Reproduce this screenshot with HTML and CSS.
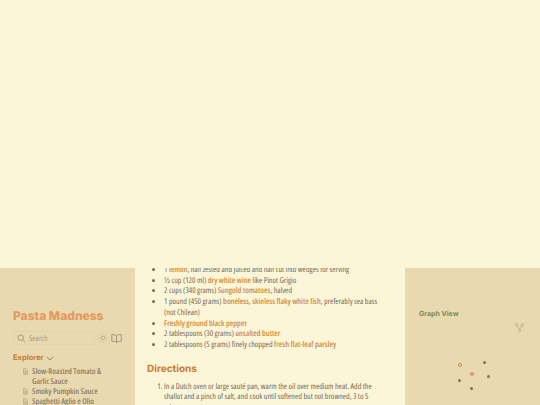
FILE: index.html
```html
<!DOCTYPE html>
<html lang="en">

<head>
    <meta charset="UTF-8">
    <meta name="viewport" content="width=device-width, initial-scale=1.0">
    <title>Pasta Madness</title>
    <link rel="stylesheet" href="styles.css">
</head>

<body>
    <div class="page">
        <!-- Left sidebar -->
        <aside class="left">
            <h1 class="site-title">Pasta Madness</h1>
            <div class="tools">
                <div class="search">
                    <svg class="search-icon" viewBox="0 0 12 12"><circle cx="5" cy="5" r="3.6"/><path d="M7.7 7.7 11 11"/></svg>
                    <span>Search</span>
                </div>
                <svg class="tool-icon" viewBox="0 0 12 12"><circle cx="6" cy="6" r="2.2"/><path d="M6 .6v1.2M6 10.2v1.2M.6 6h1.2M10.2 6h1.2M2.2 2.2l.8.8M9 9l.8.8M2.2 9.8 3 9M9 3l.8-.8"/></svg>
                <svg class="tool-icon book" viewBox="0 0 14 12"><path d="M7 2.4C6 1.4 4 1 1 1v8.6c3 0 5 .4 6 1.4 1-1 3-1.400 6-1.400V1c-3 0-5 .4-6 1.400ZM7 2.400V11"/></svg>
            </div>
            <div class="explorer">
                Explorer
                <svg class="chevron" viewBox="0 0 10 6"><path d="M1 1l4 4 4-4"/></svg>
            </div>
            <ul class="files">
                <li><svg class="file-icon" viewBox="0 0 8 10"><path d="M1 .6h4l2 2v6.800H1ZM2.500 4.500h3M2.500 6h3M2.500 7.500h3"/></svg><span>Slow-Roasted Tomato &amp; Garlic Sauce</span></li>
                <li><svg class="file-icon" viewBox="0 0 8 10"><path d="M1 .6h4l2 2v6.800H1ZM2.500 4.500h3M2.500 6h3M2.500 7.500h3"/></svg><span>Smoky Pumpkin Sauce</span></li>
                <li><svg class="file-icon" viewBox="0 0 8 10"><path d="M1 .6h4l2 2v6.800H1ZM2.500 4.500h3M2.500 6h3M2.500 7.500h3"/></svg><span>Spaghetti Aglio e Olio</span></li>
            </ul>
        </aside>

        <!-- Recipe -->
        <main class="center">
            <ul class="ingredients">
                <li>1 <b>lemon</b>, half zested and juiced and half cut into wedges for serving</li>
                <li>½ cup (120 ml) <b>dry white wine</b> like Pinot Grigio</li>
                <li>2 cups (340 grams) <b>Sungold tomatoes</b>, halved</li>
                <li>1 pound (450 grams) <b>boneless, skinless flaky white fish</b>, preferably sea bass (not Chilean)</li>
                <li><b>Freshly ground black pepper</b></li>
                <li>2 tablespoons (30 grams) <b>unsalted butter</b></li>
                <li>2 tablespoons (5 grams) finely chopped <b>fresh flat-leaf parsley</b></li>
            </ul>
            <h2 class="section">Directions</h2>
            <ol class="steps">
                <li>In a Dutch oven or large sauté pan, warm the oil over medium heat. Add the shallot and a pinch of salt, and cook until softened but not browned, 3 to 5 minutes.</li>
            </ol>
        </main>

        <!-- Right sidebar -->
        <aside class="right">
            <h3 class="graph-title">Graph View</h3>
            <div class="graph">
                <svg class="graph-icon" viewBox="0 0 10 10"><circle cx="2" cy="2" r="1.400"/><circle cx="8" cy="2" r="1.400"/><circle cx="5" cy="8" r="1.400"/><path d="M2 3.400C2 5.500 5 5 5 6.600M8 3.400C8 5.500 5 5 5 6.600"/></svg>
                <span class="node visited"></span>
                <span class="node current"></span>
                <span class="node n1"></span>
                <span class="node n2"></span>
                <span class="node n3"></span>
                <span class="node n4"></span>
            </div>
        </aside>
    </div>
</body>

</html>
```

FILE: styles.css
```css
/* General */
html,
body {
    height: 100%;
}

body {
    margin: 0;
    background-color: #fcf6d8;
    color: #75695a;
    font-family: "Open Sans", sans-serif;
    font-size: 8px;
    font-stretch: 81%;
    text-rendering: geometricPrecision;
    overflow: hidden;
}

.page {
    display: flex;
    height: 137px;
    margin-top: 268px;
}

/* Sidebars */
.left,
.right {
    width: 135px;
    flex-shrink: 0;
    box-sizing: border-box;
    background-color: #e8d9b0;
    overflow: hidden;
}

.left {
    padding: 40px 13px 0;
}

.site-title {
    margin: 0 0 7px;
    font-family: Inter, sans-serif;
    font-size: 12px;
    line-height: 16px;
    font-weight: 800;
    color: #e59a5c;
}

.tools {
    display: flex;
    align-items: center;
    margin-bottom: 8px;
}

.search {
    display: flex;
    align-items: center;
    gap: 3px;
    box-sizing: border-box;
    width: 82px;
    height: 14px;
    padding-left: 3px;
    border: 1px solid #e2d3aa;
    border-radius: 2px;
    color: #a99b80;
}

.search-icon,
.tool-icon {
    fill: none;
    stroke: #7d725e;
    stroke-width: 0.8;
}

.search-icon {
    width: 9px;
    height: 9px;
}

.tool-icon {
    width: 10px;
    height: 10px;
    margin-left: 3px;
    stroke: #a89a7c;
}

.tool-icon.book {
    width: 11px;
    height: 11px;
    stroke: #7d725e;
}

.explorer {
    display: flex;
    align-items: center;
    gap: 2px;
    margin-bottom: 4px;
    font-family: Inter, sans-serif;
    font-size: 7.500px;
    line-height: 10px;
    font-weight: 700;
    color: #cc7a2f;
}

.chevron {
    width: 8px;
    height: 5px;
    fill: none;
    stroke: #7d725e;
}

.files {
    list-style: none;
    margin: 0;
    padding: 0 8px 0 10px;
    font-weight: 600;
    line-height: 10px;
    color: #8a7d68;
}

.files li {
    display: flex;
    gap: 4px;
}

.file-icon {
    width: 5px;
    height: 7px;
    margin-top: 1px;
    flex-shrink: 0;
    fill: none;
    stroke: #8a7d68;
    stroke-width: 0.7;
}

/* Recipe column */
.center {
    flex: 1;
    padding: 0 17px 0 12px;
    line-height: 10.700px;
    overflow: hidden;
}

.ingredients {
    margin: -3px 0 0;
    padding-left: 17px;
}

.ingredients b {
    font-weight: 600;
    color: #d08a3e;
}

.section {
    margin: 12px 0 7px;
    font-family: Inter, sans-serif;
    font-size: 10px;
    line-height: 12px;
    font-weight: 700;
    color: #cc7a2f;
}

.steps {
    margin: 0;
    padding-left: 17px;
}

/* Graph */
.right {
    padding: 41px 14px 0;
}

.graph-title {
    margin: 0;
    font-family: Inter, sans-serif;
    font-size: 7px;
    line-height: 10px;
    font-weight: 700;
    color: #7f8a4c;
}

.graph {
    position: relative;
}

.graph-icon {
    position: absolute;
    top: 4px;
    left: 96px;
    width: 9px;
    height: 9px;
    fill: none;
    stroke: #b7ab8a;
    stroke-width: 0.8;
}

.node {
    position: absolute;
    width: 3px;
    height: 3px;
    border-radius: 50%;
    background-color: #7d725e;
}

.visited {
    top: 44px;
    left: 39px;
    width: 4px;
    height: 4px;
    box-sizing: border-box;
    border: 1px solid #d08a3e;
    background-color: transparent;
}

.current {
    top: 53px;
    left: 51px;
    width: 4px;
    height: 4px;
    background-color: #e59a5c;
}

.n1 { top: 42px; left: 64px; }
.n2 { top: 56px; left: 68px; }
.n3 { top: 60px; left: 39px; }
.n4 { top: 68px; left: 51px; }
```
